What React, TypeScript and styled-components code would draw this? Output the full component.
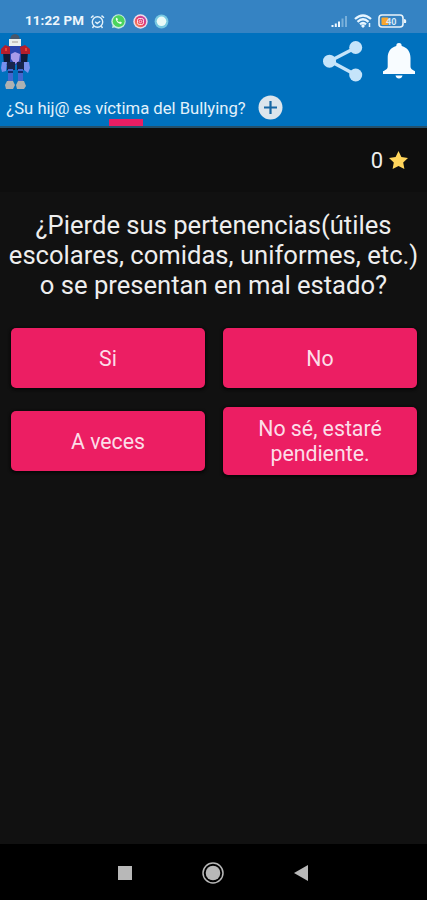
import React from "react";
import styled, { createGlobalStyle } from "styled-components";

const GlobalStyle = createGlobalStyle`
  * { box-sizing: border-box; }
  body { margin: 0; background: #111; font-family: Roboto, "Liberation Sans", sans-serif; }
  svg { display: block; flex: none; }
`;

const Screen = styled.div`
  width: 427px;
  height: 900px;
  display: flex;
  flex-direction: column;
  background: #111111;
  overflow: hidden;
`;

const StatusBar = styled.div`
  height: 33px;
  flex: none;
  display: flex;
  align-items: center;
  padding: 9px 20px 0 25px;
  background: #3583c3;
  color: #eef6fc;
`;

const Clock = styled.span`
  width: 65px;
  font-size: 13.4px;
  font-weight: 700;
  line-height: 16px;
  letter-spacing: 0.1px;
  white-space: nowrap;
`;

const StatusIcons = styled.div<{ $gap: number; $end?: boolean }>`
  display: flex;
  align-items: center;
  gap: ${(p) => p.$gap}px;
  margin-left: ${(p) => (p.$end ? "auto" : "0")};
`;

const Header = styled.header`
  height: 95px;
  flex: none;
  display: flex;
  flex-direction: column;
  background: #0071be;
  border-bottom: 2px solid #24506b;
`;

const Toolbar = styled.div`
  height: 57px;
  display: flex;
  justify-content: space-between;
`;

const Actions = styled.div`
  display: flex;
  gap: 19px;
  padding: 7px 11px 0 0;
`;

const Tab = styled.div`
  height: 36px;
  display: flex;
  padding-left: 6px;
`;

const TabTitle = styled.div`
  width: 240px;
  display: flex;
  flex-direction: column;
  align-items: center;
  justify-content: space-between;
  padding-top: 9px;
  color: #e3f1fb;
  font-size: 16.65px;
  line-height: 20px;
  white-space: nowrap;
`;

const Indicator = styled.div`
  width: 34px;
  height: 7px;
  flex: none;
  background: #e91e63;
`;

const AddButton = styled.div`
  padding: 5px 0 0 12px;
`;

const ScoreBar = styled.div`
  height: 64px;
  flex: none;
  display: flex;
  align-items: center;
  justify-content: flex-end;
  gap: 5px;
  padding: 1px 18px 0 0;
  background: #0e0e0e;
  color: #ededed;
  font-size: 22px;
  line-height: 26px;
`;

const Question = styled.h1`
  height: 108px;
  flex: none;
  margin: 0;
  padding-top: 18px;
  color: #eeeeee;
  font-size: 25.6px;
  font-weight: 400;
  line-height: 30px;
  text-align: center;
  white-space: nowrap;
`;

const Answers = styled.div`
  display: grid;
  grid-template-columns: 194px 194px;
  grid-template-rows: 116px 50px;
  justify-content: center;
  align-items: center;
  column-gap: 18px;
  padding: 0 0 0 1px;
`;

const Answer = styled.button<{ $tall?: boolean }>`
  height: ${(p) => (p.$tall ? 68 : 60)}px;
  border: 0;
  border-radius: 5px;
  padding: 0;
  background: #ec1e63;
  color: #fcdde8;
  box-shadow: 0 1px 3px 1px #060606;
  font: 400 21.3px/25px Roboto, "Liberation Sans", sans-serif;
`;

const NavigationBar = styled.nav`
  height: 56px;
  flex: none;
  display: flex;
  align-items: center;
  justify-content: space-between;
  margin-top: auto;
  padding: 1px 118px 0 117px;
  background: #000;
`;

const RobotIcon = () => (
  <svg width="32" height="57" viewBox="0 33 32 57">
    <path d="M11 36q4-4 8 0l1 4H10z" fill="#48576a" />
    <path d="M9 39h12v7H9z" fill="#e9eeed" />
    <path d="M12 42h6" stroke="#a39a91" />
    <path d="M8 46h14l2 14-5 5h-9l-4-5z" fill="#2944ae" />
    <path d="M3 52h7v13H4zM21 52h7l-1 13h-6z" fill="#111b38" />
    <path d="M1 49l4-4 5 2v7H1zM20 47l5-2 5 4v5h-9z" fill="#b41e2c" />
    <path d="M5 48h2v3H5zM25 48h2v3h-2z" fill="#ec4031" />
    <path d="M11 54l4-2 5 2-1 7-4 3-4-5z" fill="#a99be9" />
    <path d="M2 62h5l-1 9-4 1-1-4zM24 62h5l1 6-2 5-4-3z" fill="#7790ed" />
    <path d="M7 62h8v8H7zM17 62h7v8h-7z" fill="#18254d" />
    <path d="M8 69h5v13H8zM18 69h5v13h-5z" fill="#4367cf" />
    <path d="M8 72h5M18 72h5" stroke="#152e70" strokeWidth="2" />
    <path d="M7 81h6l2 4-2 4H6l-1-4zM18 81h6l2 5-2 3h-7l-1-4z" fill="#adb1b2" />
  </svg>
);

const ShareIcon = () => (
  <svg width="40" height="42" viewBox="0 0 40 42">
    <path d="M33 7.500L7 21l26 14" fill="none" stroke="#c5e4fa" strokeWidth="3.4" />
    <g fill="#c5e4fa"><circle cx="32.700" cy="7.500" r="6.500" /><circle cx="6.500" cy="21.200" r="6.500" /><circle cx="32.700" cy="35" r="6.500" /></g>
  </svg>
);

const BellIcon = () => (
  <svg width="34" height="42" viewBox="0 0 34 42">
    <path d="M17 3c-2 0-2.700 1-2.700 3C8.500 7.500 5.700 12 5.700 18v8.500c0 2-1 3-4.700 4.800V34h32v-2.700c-3.500-1.800-4.500-2.800-4.500-4.800V18c0-6-3-10.500-8.800-12 0-2-.7-3-2.700-3zM13.500 35.500h7c-.5 2-1.500 3-3.500 3s-3-1-3.500-3z" fill="#f8fcff" />
  </svg>
);

const AlarmIcon = () => (
  <svg width="15" height="15" viewBox="0 0 15 15" fill="none" stroke="#e3f2fb" strokeWidth="1.400">
    <circle cx="7.500" cy="8" r="5.200" /><path d="M5.200 7.700l2 1.800 3-2.200M1 3.800L3.500 1.600M14 3.800l-2.500-2.200M3.700 12.200L2.500 14M11.300 12.200l1.200 1.800" />
  </svg>
);

const PhoneBadge = () => (
  <svg width="15" height="15" viewBox="0 0 15 15">
    <circle cx="7.500" cy="7.500" r="7.200" fill="#c5ebdb" /><circle cx="7.700" cy="7.200" r="5.900" fill="#4bd45e" /><path d="M1 14l1-4 3 3z" fill="#c5ebdb" />
    <path d="M5 4c-1 2 2 6 5 6l1-1.500-2-1-1 .8L6.200 6.500 7 5.600 6 3.700z" fill="#effff1" />
  </svg>
);

const CameraBadge = () => (
  <svg width="15" height="15" viewBox="0 0 15 15">
    <defs><linearGradient id="camera" x1="0" y1="1" x2="1" y2="0"><stop stopColor="#f7a44e" /><stop offset=".5" stopColor="#e93b69" /><stop offset="1" stopColor="#b14bc5" /></linearGradient></defs>
    <circle cx="7.500" cy="7.500" r="7.200" fill="#f1dce8" /><circle cx="7.500" cy="7.500" r="5.700" fill="url(#camera)" />
    <rect x="4.500" y="4.500" width="6" height="6" rx="1.700" fill="none" stroke="#ffe0e8" /><circle cx="7.500" cy="7.500" r="1.300" fill="none" stroke="#ffe0e8" strokeWidth=".8" />
  </svg>
);

const BubbleBadge = () => (
  <svg width="15" height="15" viewBox="0 0 15 15"><circle cx="7.500" cy="7.500" r="6.900" fill="#77c8e1" /><circle cx="7.500" cy="7.300" r="4.800" fill="#e9faf7" /></svg>
);

const SignalIcon = () => (
  <svg width="17" height="13" viewBox="0 0 17 13" strokeWidth="2">
    <path d="M1.500 12v-2M4.800 12V8.500M8 12V6.500" stroke="#edf7ff" /><path d="M11.500 12V3.500M15 12V1" stroke="#78afda" />
  </svg>
);

const WifiIcon = () => (
  <svg width="18" height="14" viewBox="0 0 18 14" fill="none" stroke="#e6f5ff" strokeWidth="2.300">
    <path d="M1 5Q9-2 17 5M3.500 7.800q5.500-5 11 0M6 10.300q3-2.600 6 0" /><path d="M9 10l2 2-2 2-2-2z" fill="#e6f5ff" stroke="none" /><path d="M15.500 9v4" strokeWidth="1.500" />
  </svg>
);

const BatteryIcon = () => (
  <svg width="29" height="14" viewBox="0 0 29 14">
    <rect x="1" y="1" width="24" height="12" rx="3" fill="none" stroke="#eaf4fa" strokeWidth="1.600" /><path d="M26 5q3 0 2 4h-2z" fill="#eaf4fa" />
    <rect x="3.500" y="3.500" width="7" height="7.500" rx="1" fill="#f8a72e" /><text x="8" y="10.500" fontSize="9" fontWeight="700" fill="#d6eaf8" fontFamily="Roboto">40</text>
  </svg>
);

export default function App() {
  return (
    <>
      <GlobalStyle />
      <Screen>
        <StatusBar>
          <Clock>11:22 PM</Clock>
          <StatusIcons $gap={6.3}><AlarmIcon /><PhoneBadge /><CameraBadge /><BubbleBadge /></StatusIcons>
          <StatusIcons $gap={6} $end><SignalIcon /><WifiIcon /><BatteryIcon /></StatusIcons>
        </StatusBar>
        <Header>
          <Toolbar><RobotIcon /><Actions><ShareIcon /><BellIcon /></Actions></Toolbar>
          <Tab>
            <TabTitle><span>¿Su hij@ es víctima del Bullying?</span><Indicator /></TabTitle>
            <AddButton>
              <svg width="25" height="25" viewBox="0 0 25 25"><circle cx="12.500" cy="12.500" r="12" fill="#dce5ec" /><path d="M12.500 6v13M6 12.500h13" stroke="#1767a4" strokeWidth="2.200" /></svg>
            </AddButton>
          </Tab>
        </Header>
        <ScoreBar>
          <span>0</span>
          <svg width="21" height="21" viewBox="0 0 21 21"><path d="M10.500 1l2.900 6 6.600.9-4.800 4.600 1.200 6.600-5.900-3.200-5.900 3.200 1.200-6.600L1 7.900 7.600 7z" fill="#ffd55c" /></svg>
        </ScoreBar>
        <Question>¿Pierde sus pertenencias(útiles<br />escolares, comidas, uniformes, etc.)<br />o se presentan en mal estado?</Question>
        <Answers>
          <Answer>Si</Answer><Answer>No</Answer>
          <Answer>A veces</Answer><Answer $tall>No sé, estaré<br />pendiente.</Answer>
        </Answers>
        <NavigationBar>
          <svg width="16" height="16"><path d="M1 1h14v14H1z" fill="#b8b8b8" /></svg>
          <svg width="24" height="24" viewBox="0 0 24 24"><circle cx="12" cy="12" r="10" fill="none" stroke="#b8b8b8" strokeWidth="1.500" /><circle cx="12" cy="12" r="7.300" fill="#b8b8b8" /></svg>
          <svg width="16" height="18" viewBox="0 0 16 18"><path d="M1 9L15 1v16z" fill="#b8b8b8" /></svg>
        </NavigationBar>
      </Screen>
    </>
  );
}
